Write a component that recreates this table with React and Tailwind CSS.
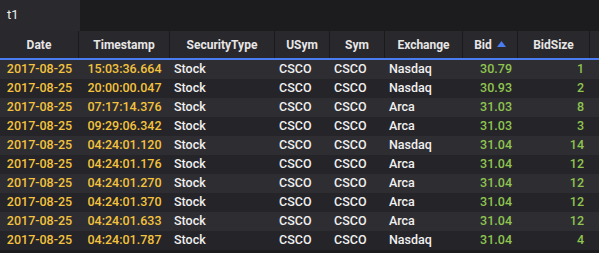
import React from 'react';

const columns = [
  { key: 'date', label: 'Date', width: 'w-[79px]' },
  { key: 'ts', label: 'Timestamp', width: 'w-[91px]' },
  { key: 'type', label: 'SecurityType', width: 'w-[105px]' },
  { key: 'usym', label: 'USym', width: 'w-[55px]' },
  { key: 'sym', label: 'Sym', width: 'w-[55px]' },
  { key: 'exch', label: 'Exchange', width: 'w-[78px]' },
  { key: 'bid', label: 'Bid', width: 'w-[55px]', sorted: true },
  { key: 'size', label: 'BidSize', width: 'w-[72px]' },
];

const rows = [
  ['2017-08-25', '15:03:36.664', 'Stock', 'CSCO', 'CSCO', 'Nasdaq', '30.79', '1'],
  ['2017-08-25', '20:00:00.047', 'Stock', 'CSCO', 'CSCO', 'Nasdaq', '30.93', '2'],
  ['2017-08-25', '07:17:14.376', 'Stock', 'CSCO', 'CSCO', 'Arca', '31.03', '8'],
  ['2017-08-25', '09:29:06.342', 'Stock', 'CSCO', 'CSCO', 'Arca', '31.03', '3'],
  ['2017-08-25', '04:24:01.120', 'Stock', 'CSCO', 'CSCO', 'Nasdaq', '31.04', '14'],
  ['2017-08-25', '04:24:01.176', 'Stock', 'CSCO', 'CSCO', 'Arca', '31.04', '12'],
  ['2017-08-25', '04:24:01.270', 'Stock', 'CSCO', 'CSCO', 'Arca', '31.04', '12'],
  ['2017-08-25', '04:24:01.370', 'Stock', 'CSCO', 'CSCO', 'Arca', '31.04', '12'],
  ['2017-08-25', '04:24:01.633', 'Stock', 'CSCO', 'CSCO', 'Arca', '31.04', '12'],
  ['2017-08-25', '04:24:01.787', 'Stock', 'CSCO', 'CSCO', 'Nasdaq', '31.04', '4'],
];

const cellStyle = (i) => {
  // date + timestamp centered yellow, text left, numbers right green
  if (i === 0 || i === 1) return 'justify-center text-[#f3c23e]';
  if (i >= 6) return 'justify-end pr-[6px] text-[#8fc450]';
  return 'justify-start pl-[4px] text-[#f0f0f0]';
};

const App = () => {
  return (
    <div className="w-[599px] h-[253px] overflow-hidden bg-[#1c1b1e] font-['Roboto',sans-serif] text-[13px]">
      {/* tab bar */}
      <div className="flex h-[31px] bg-[#1c1b1e]">
        <div className="w-[80px] h-full bg-[#2a292d] text-[#ececec] pl-[7px] pt-[8px] text-[13px] leading-none">t1</div>
      </div>

      {/* header */}
      <div className="flex h-[27px] bg-[#29282c]">
        {columns.map((c) => (
          <div
            key={c.key}
            className={`${c.width} shrink-0 flex items-center justify-center gap-[5px] border-r border-[#1a191c] font-bold text-[12px] text-[#e6e6e6]`}
          >
            <span>{c.label}</span>
            {c.sorted && (
              <svg width="9" height="6" viewBox="0 0 9 6" className="mt-[-2px]">
                <polygon points="4.5,0 9,6 0,6" fill="#4a7cf2" />
              </svg>
            )}
          </div>
        ))}
        <div className="flex-1 bg-[#29282c]" />
      </div>
      <div className="h-[2px] bg-[#4a7cf2]" />

      {/* rows */}
      <div className="flex flex-col">
        {rows.map((r, ri) => (
          <div key={ri} className={`flex h-[19px] ${ri % 2 === 0 ? 'bg-[#2e2d31]' : 'bg-[#252428]'}`}>
            {r.map((v, i) => (
              <div key={i} className={`${columns[i].width} shrink-0 flex items-center leading-none font-medium text-[12.5px] ${cellStyle(i)}`}>
                {v}
              </div>
            ))}
            <div className="flex-1" />
          </div>
        ))}
      </div>
    </div>
  );
};

export default App;
